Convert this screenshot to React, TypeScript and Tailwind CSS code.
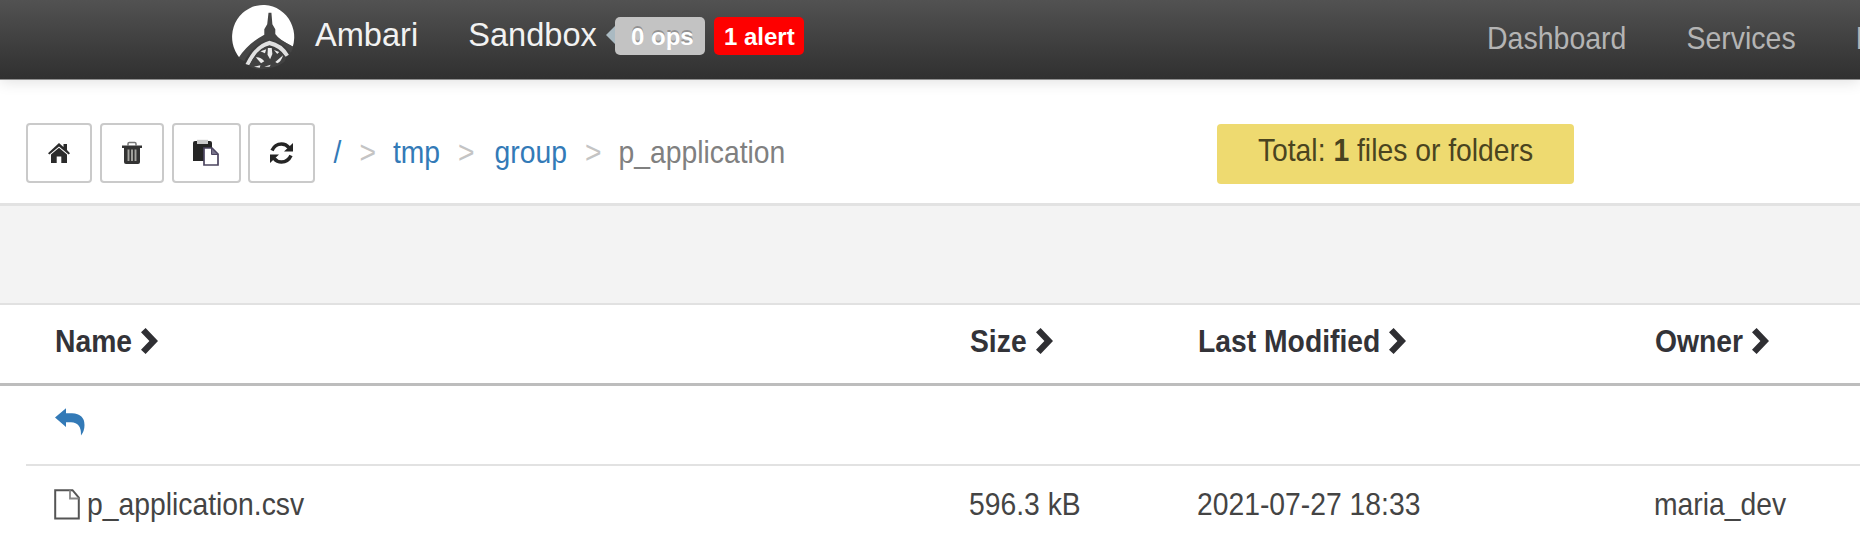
import React from 'react';

type LabelProps = { children: React.ReactNode; className?: string };

function Label({ children, className = '' }: LabelProps) {
  return (
    <span className={'inline-block origin-center scale-y-[1.1] whitespace-pre text-[28.3px] leading-8 ' + className}>
      {children}
    </span>
  );
}

function Logo() {
  return (
    <svg width="66" height="68" viewBox="88 8 204 204" preserveAspectRatio="none" className="shrink-0">
      <path d="M118 176A96 96 0 1 1 282 142L206 100Z" fill="#fff" />
      <path
        d="M207 40H216L219 75L228 90V104Q240 122 284 142L276 160Q240 122 210 120Q166 126 132 186L114 176Q144 132 194 106V90L203 75Z"
        fill="#464646"
      />
      <path d="M136 194Q166 134 210 124Q250 132 270 166L260 172Q240 144 210 138Q172 146 148 198Z" fill="#e0e0e0" />
      <path d="M146 200Q172 150 210 139Q240 150 262 176L256 188Q232 206 188 210Q160 210 146 200Z" fill="#414141" />
      <path
        d="M182 156L200 150L196 162ZM205 146H217L219 164L212 180L204 166ZM224 152L240 158L234 164ZM168 174Q182 172 194 186L184 192Q176 184 168 174ZM252 168L228 188L234 192Q246 188 252 168ZM162 202L182 198L180 205ZM194 202L214 196L210 202Z"
        fill="#ececec"
      />
    </svg>
  );
}

function HomeIcon() {
  return (
    <svg width="24" height="22" viewBox="0 0 24 22" fill="#2b2b2b">
      <path d="M12 1L16.5 5V2H20V8L23 11.2L21.6 12.6L12 4.6L2.4 12.6L1 11.2Z" />
      <path d="M12 5.8L20 12.6V21H14.3V14.5H9.7V21H4V12.6Z" />
    </svg>
  );
}

function TrashIcon() {
  return (
    <svg width="22" height="24" viewBox="0 0 22 24">
      <path d="M7 4.5V2.8Q7 1.5 8.3 1.5H13.7Q15 1.5 15 2.8V4.5" fill="none" stroke="#777" strokeWidth="1.5" />
      <path d="M1 4.5H21V7H1Z" fill="#333" />
      <path d="M3 7H19V21Q19 23 17 23H5Q3 23 3 21Z" fill="#333" />
      <path d="M7.5 8.5V20M11 8.5V20M14.5 8.5V20" stroke="#a5a5a0" strokeWidth="1.9" />
    </svg>
  );
}

function PasteIcon() {
  return (
    <svg width="26" height="28" viewBox="0 0 26 28">
      <path d="M0 4Q0 2 2 2H17Q19 2 19 4V22H0Z" fill="#252525" />
      <path d="M4 .8H15V5H4Z" fill="#c9c9c9" />
      <path d="M11 9H19L25 15V26H11Z" fill="#fff" stroke="#4c4560" strokeWidth="1.7" />
      <path d="M18.5 9V15.5H25Z" fill="#77738a" stroke="#4c4560" strokeWidth="1" />
    </svg>
  );
}

function RefreshIcon() {
  return (
    <svg width="25" height="24" viewBox="0 0 25 24">
      <path d="M3 9.5Q6 3 12.5 3Q17 3 20 6.7M22 14.5Q19 21 12.5 21Q8 21 5 17.3" fill="none" stroke="#252525" strokeWidth="3.5" />
      <path d="M24 2V10.5H15ZM1 22V13.5H10Z" fill="#252525" />
    </svg>
  );
}

function Chevron() {
  return (
    <svg width="17" height="26" viewBox="0 0 17 26" className="mt-[3px] shrink-0">
      <path d="M4.6 0L17 13L4.6 26L0 21.7L8.4 13L0 4.3Z" fill="#2f2f33" />
    </svg>
  );
}

function ReturnIcon() {
  return (
    <svg width="30" height="28" viewBox="0 0 30 28">
      <path d="M0 9.5L11 .3V5.3H17Q29.5 6 29.5 17Q29.5 23 26 27.5Q26.5 14.5 16 14.2H11V19Z" fill="#337ab7" />
    </svg>
  );
}

function FileIcon() {
  return (
    <svg width="26" height="31" viewBox="0 0 26 31" fill="none" stroke="#555" strokeWidth="2" className="mt-px">
      <path d="M1.2 1.2H18.5L24.8 8.5V29.5H1.2Z" />
      <path d="M16 1.2V9.5H24.8" stroke="#888" strokeWidth="1.8" />
    </svg>
  );
}

const toolButton = 'flex h-[60px] items-center justify-center rounded-[4px] border-2 border-[#cacaca] bg-white';
const columns = 'grid grid-cols-[915px_228px_457px_1fr]';

function HeadCell({ title, className = '' }: { title: string; className?: string }) {
  return (
    <div className={'flex items-start gap-[9px] ' + className}>
      <Label className="font-bold">{title}</Label>
      <Chevron />
    </div>
  );
}

export default function App() {
  return (
    <div className="h-[544px] w-full overflow-hidden bg-white font-['Liberation_Sans',Arial,sans-serif] text-[#444]">
      <header className="relative flex h-20 items-start border-b border-[#8f8f8f] bg-linear-to-b from-[#525252] to-[#303030] pl-[230px] shadow-[0_2px_14px_rgba(0,0,0,0.12)]">
        <div className="pt-[2px]">
          <Logo />
        </div>
        <div className="flex w-[1191px] shrink-0 items-center pt-[15px] pl-[19px] text-[32.6px] leading-10 text-[#f2f2f2]">
          <span>Ambari</span>
          <span className="ml-[50px]">Sandbox</span>
          <svg width="9" height="18" viewBox="0 0 9 18" className="ml-[9px]">
            <path d="M0 9L9 0V18Z" fill="#aabac2" />
          </svg>
          <span className="mt-px flex h-[38px] w-[90px] items-center justify-center rounded-[5px] bg-[#c3c3c3] pt-0.5 pl-[5px] text-[24px] font-bold text-white [text-shadow:0_-2px_0_rgba(0,0,0,0.25)]">
            0 ops
          </span>
          <span className="mt-px ml-[9px] flex h-[38px] w-[90px] items-center justify-center rounded-[5px] bg-[#fe0000] pt-0.5 pl-px text-[24px] font-bold text-white">
            1 alert
          </span>
        </div>
        <nav className="flex shrink-0 gap-[60px] pt-[22px] text-[#b4b4b4]">
          <Label className="text-[28.5px]">Dashboard</Label>
          <Label className="text-[28.5px]">Services</Label>
          <Label className="text-[28.5px]">Hosts</Label>
        </nav>
      </header>

      <section className="flex h-[126px] items-start border-b-[3px] border-[#e2e2e2] pt-[43px] pl-[26px]">
        <div className="flex gap-[7.5px]">
          <button className={toolButton + ' w-[66px]'}><HomeIcon /></button>
          <button className={toolButton + ' w-[64.5px]'}><TrashIcon /></button>
          <button className={toolButton + ' w-[69px]'}><PasteIcon /></button>
          <button className={toolButton + ' w-[66.5px]'}><RefreshIcon /></button>
        </div>
        <div className="flex w-[902px] items-center pt-[13px] pl-[19px] text-[#337ab7]">
          <Label>/</Label>
          <Label className="ml-[18px] text-[#c4c4c4]">&gt;</Label>
          <Label className="ml-[17px]">tmp</Label>
          <Label className="ml-[18px] text-[#c4c4c4]">&gt;</Label>
          <Label className="ml-[20px]">group</Label>
          <Label className="ml-[18px] text-[#c4c4c4]">&gt;</Label>
          <Label className="ml-[17px] text-[#808080]">p_application</Label>
        </div>
        <div className="mt-px flex h-[60px] w-[357px] justify-center rounded-[4px] bg-[#eeda70] pt-[11px] pl-px text-[#4a441f]">
          <Label>Total: <b>1</b> files or folders</Label>
        </div>
      </section>

      <div className="h-[99px] border-b-2 border-[#e1e1e1] bg-[#f3f3f3]" />

      <div className={columns + ' h-[81px] items-start border-b-[3px] border-[#bdbdbd] pt-[20px] pl-[55px] text-[#333338]'}>
        <HeadCell title="Name" />
        <HeadCell title="Size" />
        <HeadCell title="Last Modified" />
        <HeadCell title="Owner" />
      </div>
      <div className="ml-[26px] h-[80px] border-b-2 border-[#e2e2e2] pt-[22px] pl-[29px]">
        <ReturnIcon />
      </div>
      <div className={columns + ' items-start pt-[22px] pl-[54px]'}>
        <div className="flex items-start gap-[7px]">
          <FileIcon />
          <Label>p_application.csv</Label>
        </div>
        <Label className="justify-self-start">596.3 kB</Label>
        <Label className="justify-self-start">2021-07-27 18:33</Label>
        <Label className="justify-self-start">maria_dev</Label>
      </div>
    </div>
  );
}
